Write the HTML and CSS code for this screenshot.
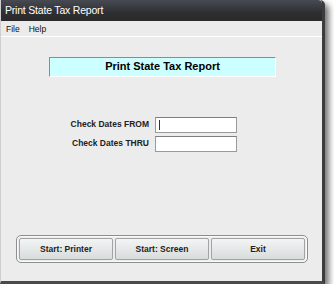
FILE: index.html
```html
<!DOCTYPE html>
<html lang="en">
    <head>
        <meta charset="UTF-8">
        <meta name="viewport" content="width=device-width, initial-scale=1.0">
        <title>Print State Tax Report</title>
        <link rel="stylesheet" href="styles.css">
    </head>
    <body>

        <!-- Window -->
        <div class="window">
            <div class="title-bar">Print State Tax Report</div>

            <!-- Menu -->
            <div class="menu-bar">
                <span>File</span>
                <span>Help</span>
            </div>

            <!-- Main Content -->
            <div class="content">
                <div class="banner">Print State Tax Report</div>

                <div class="date-form">
                    <label class="date-label">Check Dates FROM</label>
                    <div class="date-input"><span class="caret"></span></div>
                    <label class="date-label">Check Dates THRU</label>
                    <div class="date-input"></div>
                </div>

                <div class="button-panel">
                    <button>Start: Printer</button>
                    <button>Start: Screen</button>
                    <button>Exit</button>
                </div>
            </div>
        </div>

    </body>
</html>
```

FILE: styles.css
```css
/* CSS */
body {
    margin: 0;
    background-color: #ffffff;
    font-family: "Liberation Sans", Arial, sans-serif;
}
.window {
    width: 325px;
    height: 284px;
    box-sizing: border-box;
    display: flex;
    flex-direction: column;
    background-color: #ececec;
    border-left: 1px solid #cfcfcf;
    border-right: 3px solid #3c3c3c;
    border-bottom: 3px solid #4a4a4a;
    border-top-right-radius: 5px;
    box-shadow: 4px 4px 6px rgba(0, 0, 0, 0.55);
}
.title-bar {
    height: 21px;
    line-height: 20px;
    padding-left: 4px;
    color: white;
    font-size: 10.5px;
    letter-spacing: -0.2px;
    background: linear-gradient(#474a53, #2e2f32 60%, #2a2a2a);
    border-top-right-radius: 4px;
}
.menu-bar {
    height: 15px;
    display: flex;
    align-items: center;
    gap: 9px;
    padding-left: 5px;
    font-size: 8.5px;
    color: #111;
    background-color: #ebebeb;
    border-bottom: 1px solid #ffffff;
}
.content {
    flex: 1;
    display: flex;
    flex-direction: column;
}
.banner {
    margin: 20px 0 0 48px;
    width: 227px;
    height: 20px;
    box-sizing: border-box;
    background-color: #ccffff;
    border: 1px solid #ffffff;
    border-top-color: #8c8c8c;
    border-left-color: #8c8c8c;
    text-align: center;
    font-size: 11px;
    font-weight: bold;
    line-height: 16px;
    color: #000;
}
.date-form {
    margin-top: 40px;
    display: grid;
    grid-template-columns: 148px 82px;
    grid-auto-rows: 16px;
    column-gap: 6px;
    row-gap: 3px;
}
.date-label {
    font-size: 8.5px;
    font-weight: bold;
    color: #222;
    text-align: right;
    line-height: 14px;
}
.date-input {
    box-sizing: border-box;
    background-color: #ffffff;
    border: 1px solid #9a9a9a;
    border-top-color: #7e7e7e;
    display: flex;
    align-items: center;
    padding-left: 3px;
}
.caret {
    width: 1px;
    height: 10px;
    background-color: #333;
}
.button-panel {
    margin: auto 14px 18px 15px;
    height: 28px;
    box-sizing: border-box;
    display: flex;
    gap: 2px;
    padding: 2px;
    border: 1px solid #8e8e8e;
    border-radius: 5px;
    box-shadow: inset 0 0 0 1px #fafafa;
}
button {
    flex: 1;
    font-family: "Liberation Sans", Arial, sans-serif;
    font-size: 8.5px;
    font-weight: bold;
    color: #222;
    background: linear-gradient(#f3f5f5, #e3e6e6 60%, #d9dcdc);
    border: 1px solid #a2a4a4;
    border-radius: 2px;
    padding: 0;
}
```
